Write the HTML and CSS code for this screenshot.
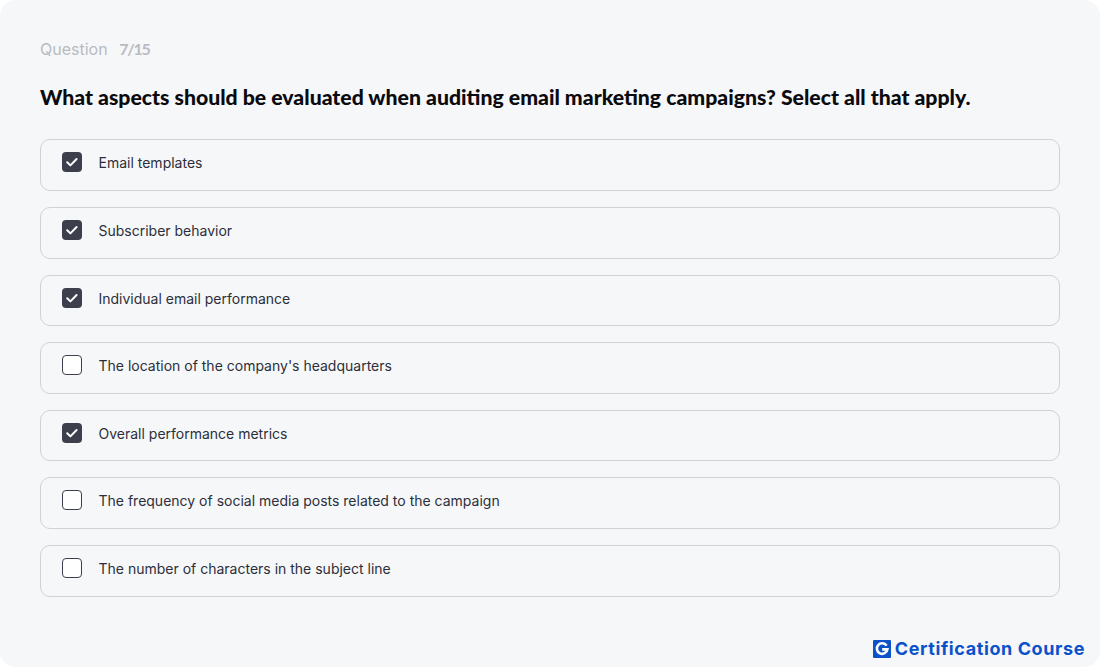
FILE: index.html
```html
<!DOCTYPE html>
<html lang="en">
<head>
<meta charset="utf-8">
<title>Question 7/15</title>
<link rel="stylesheet" href="styles.css">
</head>
<body>
<main class="card">
  <p class="counter"><span>Question</span><span class="count">7/15</span></p>
  <h1 class="question">What aspects should be evaluated when auditing email marketing campaigns? Select all that apply.</h1>
  <ul class="options">
    <li class="option"><span class="box checked"><svg viewBox="0 0 20 20"><path d="M5.2 10.2l3.2 3.2 6.2-6.4"/></svg></span><span>Email templates</span></li>
    <li class="option"><span class="box checked"><svg viewBox="0 0 20 20"><path d="M5.2 10.2l3.2 3.2 6.2-6.4"/></svg></span><span>Subscriber behavior</span></li>
    <li class="option"><span class="box checked"><svg viewBox="0 0 20 20"><path d="M5.2 10.2l3.2 3.2 6.2-6.4"/></svg></span><span>Individual email performance</span></li>
    <li class="option"><span class="box"></span><span>The location of the company's headquarters</span></li>
    <li class="option"><span class="box checked"><svg viewBox="0 0 20 20"><path d="M5.2 10.2l3.2 3.2 6.2-6.4"/></svg></span><span>Overall performance metrics</span></li>
    <li class="option"><span class="box"></span><span>The frequency of social media posts related to the campaign</span></li>
    <li class="option"><span class="box"></span><span>The number of characters in the subject line</span></li>
  </ul>
  <div class="brand">
    <svg class="brand-mark" viewBox="0 0 18 18"><rect width="18" height="18" rx="1"/><path d="M13.6 5.6A5.3 5.3 0 1 0 14.4 9.4H9.2"/></svg>
    <span>Certification Course</span>
  </div>
</main>
</body>
</html>
```
FILE: styles.css
```css
* { box-sizing: border-box; }
html, body { margin: 0; padding: 0; height: 100%; background: #fff; }
.card {
  width: 1100px;
  height: 667px;
  background: #f6f7f9;
  border-radius: 16px;
  padding: 40px 40px 0;
  font-family: Inter, "Liberation Sans", sans-serif;
  display: flex;
  flex-direction: column;
}
.counter {
  margin: 0;
  display: flex;
  gap: 11.5px;
  height: 20px;
  line-height: 18px;
  font-size: 16px;
  color: #b8bbc2;
}
.count { font-family: Lato, sans-serif; font-weight: 700; font-size: 16px; letter-spacing: -1.2px; }
.question {
  margin: 24px 0 0;
  height: 26px;
  line-height: 26px;
  font-family: Lato, sans-serif;
  font-size: 21.23px;
  font-weight: 900;
  color: #0b0b0f;
  white-space: nowrap;
}
.options {
  list-style: none;
  margin: 29.4px 0 0;
  padding: 0;
  display: flex;
  flex-direction: column;
  gap: 16px;
}
.option {
  height: 51.6px;
  border: 1px solid #d0d2d8;
  border-radius: 10px;
  padding: 12px 21px 0;
  display: flex;
  align-items: flex-start;
  gap: 16.5px;
  font-size: 14px;
  line-height: 22px;
  color: #2c2f3a;
}
.box {
  width: 20px;
  height: 20px;
  flex: none;
  border: 1.4px solid #3d404c;
  border-radius: 4px;
  background: #fff;
}
.box.checked { background: #3d404c; border: 0; }
.box svg { display: block; width: 20px; height: 20px; }
.box path { fill: none; stroke: #fff; stroke-width: 2; stroke-linecap: round; stroke-linejoin: round; }
.brand {
  margin-top: auto;
  margin-bottom: 8px;
  align-self: flex-end;
  margin-right: -25px;
  display: flex;
  align-items: center;
  gap: 4px;
  font-family: Inter, sans-serif;
  font-size: 18px;
  line-height: 20px;
  font-weight: 700;
  letter-spacing: 0.6px;
  color: #0b52c9;
}
.brand-mark { width: 18px; height: 18px; display: block; }
.brand-mark rect { fill: #0b52c9; }
.brand-mark path { fill: none; stroke: #fff; stroke-width: 2.6; }
```
